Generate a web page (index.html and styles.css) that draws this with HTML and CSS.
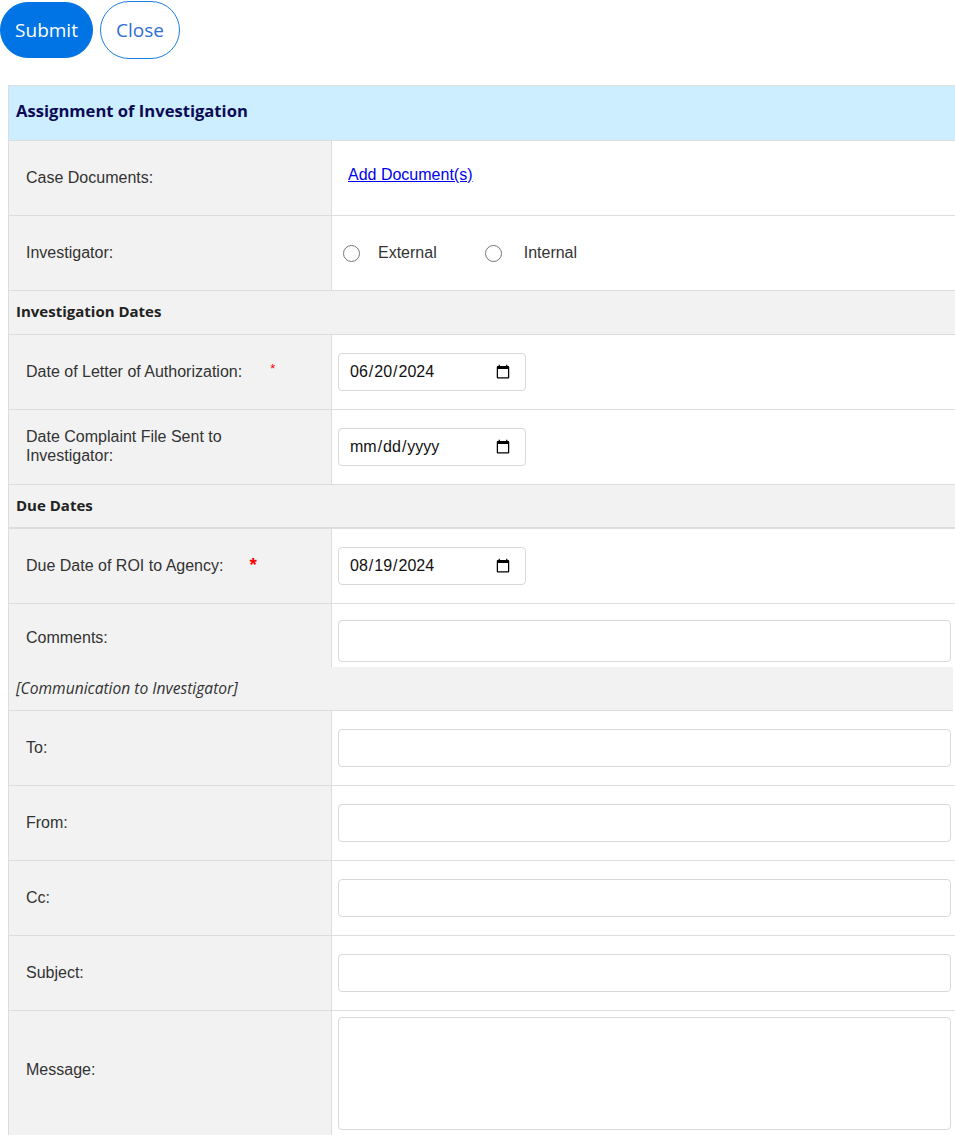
FILE: index.html
```html
<!DOCTYPE html>
<html lang="en">
<head>
<meta charset="utf-8">
<title>Assignment of Investigation</title>
<link rel="stylesheet" href="styles.css">
</head>
<body>
<div class="actions">
  <button class="btn btn-primary" type="button">Submit</button>
  <button class="btn btn-outline" type="button">Close</button>
</div>

<div class="form">
  <div class="title-row">Assignment of Investigation</div>

  <div class="row">
    <div class="label">Case Documents:</div>
    <div class="value value-link"><a href="#" class="link">Add Document(s)</a></div>
  </div>

  <div class="row">
    <div class="label">Investigator:</div>
    <div class="value radios">
      <label class="radio"><input type="radio" name="inv"><span>External</span></label>
      <label class="radio"><input type="radio" name="inv"><span>Internal</span></label>
    </div>
  </div>

  <div class="section">Investigation Dates</div>

  <div class="row">
    <div class="label"><span class="label-text">Date of Letter of Authorization:</span><span class="req req-small">*</span></div>
    <div class="value"><input class="date" type="date" value="2024-06-20"></div>
  </div>

  <div class="row">
    <div class="label"><span class="label-text wrap">Date Complaint File Sent to Investigator:</span></div>
    <div class="value"><input class="date" type="date"></div>
  </div>

  <div class="section section-thick">Due Dates</div>

  <div class="row">
    <div class="label"><span class="label-text">Due Date of ROI to Agency:</span><span class="req req-big">*</span></div>
    <div class="value"><input class="date" type="date" value="2024-08-19"></div>
  </div>

  <div class="row row-comments">
    <div class="label">Comments:</div>
    <div class="value"><input class="text text-tall" type="text"></div>
  </div>

  <div class="section section-italic">[Communication to Investigator]</div>

  <div class="row">
    <div class="label">To:</div>
    <div class="value"><input class="text" type="text"></div>
  </div>

  <div class="row">
    <div class="label">From:</div>
    <div class="value"><input class="text" type="text"></div>
  </div>

  <div class="row">
    <div class="label">Cc:</div>
    <div class="value"><input class="text" type="text"></div>
  </div>

  <div class="row">
    <div class="label">Subject:</div>
    <div class="value"><input class="text" type="text"></div>
  </div>

  <div class="row row-message">
    <div class="label">Message:</div>
    <div class="value"><textarea class="textarea"></textarea></div>
  </div>
</div>
</body>
</html>
```

FILE: styles.css
```css
html, body {
  margin: 0;
  padding: 0;
  background: #ffffff;
  overflow-x: hidden;
}

body {
  font-family: "Liberation Sans", Arial, sans-serif;
  color: #333333;
}

.actions {
  display: flex;
  gap: 7px;
  padding-top: 1px;
  height: 58px;
  align-items: center;
  margin-bottom: 26px;
}

.btn {
  font-family: "Open Sans", "Noto Sans", sans-serif;
  font-size: 19px;
  border-radius: 29px;
  cursor: pointer;
  padding: 0;
}

.btn-primary {
  width: 93px;
  height: 56px;
  background: #0074e4;
  border: 1px solid #0074e4;
  color: #ffffff;
}

.btn-outline {
  width: 80px;
  height: 58px;
  background: #ffffff;
  border: 1px solid #1a7fe6;
  color: #2f6fd8;
}

.form {
  margin-left: 8px;
  width: 960px;
  border-left: 1px solid #dddddd;
  border-top: 1px solid #dddddd;
}

.title-row {
  height: 55px;
  box-sizing: border-box;
  padding-bottom: 5px;
  background: #cceeff;
  border-bottom: 1px solid #dddddd;
  display: flex;
  align-items: center;
  padding-left: 7px;
  font-family: "Open Sans", "Noto Sans", sans-serif;
  font-weight: 700;
  font-size: 16.6px;
  color: #0b0b55;
}

.row {
  display: grid;
  grid-template-columns: 323px 1fr;
  height: 74px;
  border-bottom: 1px solid #dddddd;
}

.label {
  background: #f2f2f2;
  border-right: 1px solid #dddddd;
  display: flex;
  align-items: center;
  padding-left: 17px;
  padding-bottom: 2px;
  font-size: 16px;
  color: #333333;
  line-height: 19px;
}

.label-text.wrap {
  width: 230px;
}

.req {
  color: #ff0000;
}

.req-small {
  font-size: 13px;
  margin-left: 28px;
  position: relative;
  top: -3px;
}

.req-big {
  font-size: 19px;
  font-weight: 700;
  margin-left: 26px;
  position: relative;
  top: -1px;
}

.value {
  display: flex;
  align-items: center;
  padding-left: 6px;
  background: #ffffff;
}

.value-link {
  align-items: flex-start;
  padding-left: 16px;
  padding-top: 25px;
}

.link {
  color: #0000ee;
  text-decoration: underline;
  font-size: 16px;
}

.radios {
  padding-left: 11px;
}

.radio {
  display: flex;
  align-items: center;
  font-size: 16px;
  color: #333333;
  margin-right: 48px;
}

.radio input {
  appearance: none;
  -webkit-appearance: none;
  width: 17px;
  height: 17px;
  margin: 0 18px 0 0;
  border: 1px solid #767676;
  border-radius: 50%;
  background: #ffffff;
}

.radio + .radio span {
  margin-left: 4px;
}

.date {
  width: 188px;
  height: 38px;
  box-sizing: border-box;
  border: 1px solid #d9d9d9;
  border-radius: 4px;
  padding: 0 12px 0 10px;
  font-family: "Liberation Sans", Arial, sans-serif;
  font-size: 16px;
  color: #111111;
  background: #ffffff;
}

.text {
  width: 613px;
  height: 38px;
  box-sizing: border-box;
  border: 1px solid #d9d9d9;
  border-radius: 4px;
  background: #ffffff;
  font-family: "Liberation Sans", Arial, sans-serif;
  font-size: 16px;
}

.row-comments {
  height: 63px;
  border-bottom: none;
}

.row-comments .label {
  padding-bottom: 0;
  padding-top: 3px;
}

.row-comments .value {
  align-items: flex-start;
  padding-top: 16px;
}

.text-tall {
  height: 42px;
}

.section {
  height: 44px;
  box-sizing: border-box;
  padding-bottom: 3px;
  background: #f2f2f2;
  border-bottom: 1px solid #dddddd;
  display: flex;
  align-items: center;
  padding-left: 7px;
  font-family: "Open Sans", "Noto Sans", sans-serif;
  font-weight: 700;
  font-size: 15px;
  color: #222222;
}

.section-thick {
  height: 44px;
  border-bottom: 2px solid #dddddd;
}

.section-italic {
  font-weight: 400;
  font-style: italic;
  font-size: 15.6px;
  color: #333333;
  width: 944px;
  padding-bottom: 1px;
}

.row-message {
  height: 126px;
  border-bottom: none;
}

.row-message .label {
  align-items: flex-start;
  padding-top: 49px;
  padding-bottom: 0;
}

.row-message .value {
  align-items: flex-start;
  padding-top: 6px;
}

.textarea {
  width: 613px;
  height: 113px;
  box-sizing: border-box;
  border: 1px solid #d9d9d9;
  border-radius: 4px;
  resize: none;
  background: #ffffff;
}
```
